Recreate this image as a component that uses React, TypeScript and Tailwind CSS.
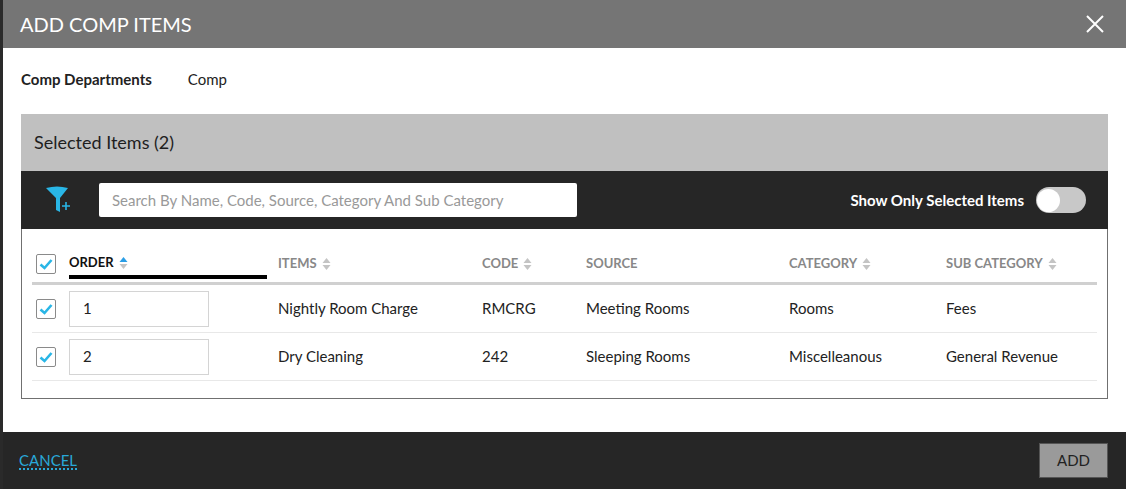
import React from "react";

const Sort = ({ active = false }: { active?: boolean }) => (
  <svg width="9" height="14" viewBox="0 0 9 14" className="ml-[5px] inline-block">
    <path d="M4.5 1 L8.5 6 H0.5 Z" fill={active ? "#2a9ee6" : "#c4c4c4"} />
    <path d="M4.5 13 L8.5 8 H0.5 Z" fill="#c4c4c4" />
  </svg>
);

const Check = () => (
  <div className="w-[20px] h-[20px] border border-[#8a8a8a] rounded-[2px] bg-white flex items-center justify-center">
    <svg width="14" height="12" viewBox="0 0 14 12">
      <path d="M1.5 6.5 L5.5 10 L12.5 2" stroke="#29b6e6" strokeWidth="2.6" fill="none" />
    </svg>
  </div>
);

const cols = "grid grid-cols-[37px_209px_204px_104px_203px_157px_1fr] items-center";

export default function App() {
  const rows = [
    ["1", "Nightly Room Charge", "RMCRG", "Meeting Rooms", "Rooms", "Fees"],
    ["2", "Dry Cleaning", "242", "Sleeping Rooms", "Miscelleanous", "General Revenue"],
  ];
  return (
    <div className="w-[1126px] h-[489px] flex bg-[#1a1a1a] overflow-hidden" style={{ fontFamily: "Lato, 'Open Sans', sans-serif" }}>
      <div className="w-[3px] bg-[#2a2a2a]" />
      <div className="flex-1 flex flex-col bg-white">
        <div className="h-[48px] bg-[#757575] flex items-center justify-between pl-[17px] pr-[22px]">
          <span className="text-white text-[20px]">ADD COMP ITEMS</span>
          <svg width="18" height="18" viewBox="0 0 18 18"><path d="M1 1 L17 17 M17 1 L1 17" stroke="white" strokeWidth="2" /></svg>
        </div>
        <div className="flex-1 px-[18px]">
          <div className="h-[66px] flex items-center text-[15px] text-[#222] gap-[36px] pb-[4px]">
            <span className="font-bold">Comp Departments</span>
            <span>Comp</span>
          </div>
          <div className="w-[1087px]">
            <div className="h-[57px] bg-[#c0c0c0] flex items-center px-[13px] text-[18px] text-[#1e1e1e]">Selected Items (2)</div>
            <div className="h-[58px] bg-[#262626] flex items-center pl-[24px] pr-[22px]">
              <svg width="26" height="28" viewBox="0 0 26 28">
                <path d="M1 2 Q12 -1 23 2 L15 12 L15 26 L11 24 L11 12 Z" fill="#29b6e6" />
                <path d="M17 20 H25 M21 16 V24" stroke="#29b6e6" strokeWidth="1.6" />
              </svg>
              <div className="ml-[28px] w-[478px] h-[34px] bg-white rounded-[2px] flex items-center px-[13px] text-[15px] text-[#999]">
                Search By Name, Code, Source, Category And Sub Category
              </div>
              <div className="flex-1" />
              <span className="text-white text-[15px] font-bold mr-[12px]">Show Only Selected Items</span>
              <div className="w-[50px] h-[26px] rounded-full bg-[#c8c8c8] flex items-center px-[1px]">
                <div className="w-[23px] h-[23px] rounded-full bg-white" />
              </div>
            </div>
            <div className="border border-t-0 border-[#707070] h-[170px] px-[10px] pt-[16px]">
              <div className={`${cols} h-[40px] text-[13px] font-bold text-[#888] border-b-[3px] border-[#d0d0d0]`}>
                <div className="pl-[4px]"><Check /></div>
                <div className="h-full flex flex-col justify-start pt-[8px]">
                  <div className="flex items-center text-[#111] w-[198px] border-b-[4px] border-black pb-[2px]">ORDER<Sort active /></div>
                </div>
                <div className="flex items-center">ITEMS<Sort /></div>
                <div className="flex items-center">CODE<Sort /></div>
                <div>SOURCE</div>
                <div className="flex items-center">CATEGORY<Sort /></div>
                <div className="flex items-center">SUB CATEGORY<Sort /></div>
              </div>
              {rows.map((r) => (
                <div key={r[0]} className={`${cols} h-[48px] text-[15px] text-[#222] border-b border-[#e8e8e8]`}>
                  <div className="pl-[4px]"><Check /></div>
                  <div><div className="w-[140px] h-[36px] border border-[#d4d4d4] flex items-center px-[13px]">{r[0]}</div></div>
                  <div>{r[1]}</div><div>{r[2]}</div><div>{r[3]}</div><div>{r[4]}</div><div>{r[5]}</div>
                </div>
              ))}
            </div>
          </div>
        </div>
        <div className="h-[57px] bg-[#262626] flex items-center justify-between pl-[16px] pr-[18px]">
          <span className="text-[#29a8d8] text-[15px] border-b-2 border-dotted border-[#29a8d8] leading-[16px]">CANCEL</span>
          <div className="w-[69px] h-[35px] bg-[#9a9a9a] border border-[#555] flex items-center justify-center text-[15px] text-[#222]">ADD</div>
        </div>
      </div>
    </div>
  );
}
